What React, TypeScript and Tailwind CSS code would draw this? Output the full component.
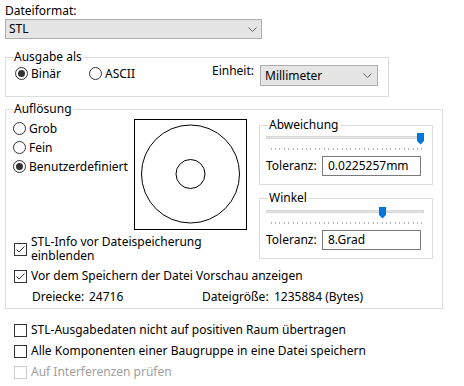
import React from 'react';

const Chevron = () => (
  <svg width="9" height="5" viewBox="0 0 9 5" className="block">
    <path d="M0.5 0.5 L4.5 4.5 L8.5 0.5" fill="none" stroke="#606060" strokeWidth="1" />
  </svg>
);

const Radio = ({ checked, label, className = '' }: { checked?: boolean; label: string; className?: string }) => (
  <div className={`flex items-center h-[19px] ${className}`}>
    <span className="w-[13px] h-[13px] rounded-full border border-[#333333] bg-white flex items-center justify-center shrink-0">
      {checked && <span className="w-[7px] h-[7px] rounded-full bg-[#333333]" />}
    </span>
    <span className="ml-[3px]">{label}</span>
  </div>
);

const Check = ({
  checked,
  disabled,
  className = '',
  children,
}: {
  checked?: boolean;
  disabled?: boolean;
  className?: string;
  children: React.ReactNode;
}) => (
  <div className={`flex items-center ${className}`}>
    <span
      className={`w-[13px] h-[13px] border bg-white flex items-center justify-center shrink-0 ${
        disabled ? 'border-[#cccccc]' : 'border-[#333333]'
      }`}
    >
      {checked && (
        <svg width="11" height="11" viewBox="0 0 11 11" className="block">
          <path d="M1.5 5.5 L4 8 L9.5 2.5" fill="none" stroke="#333333" strokeWidth="1" />
        </svg>
      )}
    </span>
    <span className={`ml-[4px] ${disabled ? 'text-[#a0a0a0]' : ''}`}>{children}</span>
  </div>
);

const GroupBox = ({
  title,
  className = '',
  titleLeft = 'left-[7px]',
  children,
}: {
  title: string;
  className?: string;
  titleLeft?: string;
  children?: React.ReactNode;
}) => (
  <div className={`relative border border-[#dcdcdc] ${className}`}>
    <span className={`absolute -top-[9px] ${titleLeft} bg-white px-[1px] leading-[16px]`}>{title}</span>
    {children}
  </div>
);

// track with ticks and a blue thumb, pos = thumb left in px
const Slider = ({ pos }: { pos: number }) => {
  const ticks = Array.from({ length: 35 }, (_, i) => 4.5 + i * 4.44);
  return (
    <svg width="160" height="21" className="block">
      <rect x="0.5" y="6.5" width="157" height="2" fill="#e7e7e7" stroke="#d6d6d6" />
      {ticks.map((x, i) => (
        <line key={i} x1={Math.round(x) + 0.5} y1="18" x2={Math.round(x) + 0.5} y2="20" stroke="#b4b4b4" />
      ))}
      <path d={`M${pos} 3 h7 v8 l-3.5 3.5 l-3.5 -3.5 z`} fill="#0078d7" />
    </svg>
  );
};

const Tolerance = ({ value }: { value: string }) => (
  <div className="flex items-center mt-[5px] pl-[6px]">
    <span className="w-[56px]">Toleranz:</span>
    <div className="w-[99px] h-[20px] border border-[#7a7a7a] bg-white flex items-center pl-[5px]">{value}</div>
  </div>
);

export default function App() {
  return (
    <div className="w-[464px] h-[386px] overflow-hidden bg-white text-black text-[12px] leading-[16px] font-['Noto_Sans',sans-serif] pl-[5px] pt-[3px]">
      <div>Dateiformat:</div>
      <div className="w-[257px] h-[20px] border border-[#adadad] bg-[#e5e5e5] flex items-center justify-between pl-[3px] pr-[4px]">
        <span>STL</span>
        <Chevron />
      </div>

      {/* Ausgabe als */}
      <GroupBox title="Ausgabe als" className="mt-[18px] w-[384px] h-[40px]">
        <div className="flex items-start pl-[9px]">
          <Radio checked label="Binär" className="w-[74px] mt-[6px]" />
          <Radio label="ASCII" className="w-[123px] mt-[6px]" />
          <div className="w-[48px] h-[19px] mt-[3px] flex items-center">Einheit:</div>
          <div className="w-[118px] h-[21px] mt-[7px] border border-[#adadad] bg-[#e5e5e5] flex items-center justify-between pl-[4px] pr-[5px]">
            <span>Millimeter</span>
            <Chevron />
          </div>
        </div>
      </GroupBox>

      {/* Auflösung */}
      <GroupBox title="Auflösung" className="mt-[12px] w-[438px] h-[200px]">
        <div className="flex">
          <div className="w-[253px] pl-[7px]">
            <div className="flex mt-[9px]">
              <div className="w-[121px] flex flex-col">
                <Radio label="Grob" />
                <Radio label="Fein" />
                <Radio checked label="Benutzerdefiniert" />
              </div>
              <div className="w-[113px] h-[111px] border border-black bg-white">
                <svg width="111" height="109" className="block">
                  <circle cx="55.5" cy="54" r="49" fill="none" stroke="black" strokeWidth="1" />
                  <circle cx="55.5" cy="54" r="14.5" fill="none" stroke="black" strokeWidth="1" />
                </svg>
              </div>
            </div>
            <Check checked className="mt-[5px] pl-[1px]">
              <span className="block leading-[14px]">
                STL-Info vor Dateispeicherung
                <br />
                einblenden
              </span>
            </Check>
          </div>

          <div className="w-[174px]">
            <GroupBox title="Abweichung" titleLeft="left-[8px]" className="mt-[15px] h-[60px]">
              <div className="pl-[6px] pt-[4px]">
                <Slider pos={151} />
              </div>
              <Tolerance value="0.0225257mm" />
            </GroupBox>
            <GroupBox title="Winkel" titleLeft="left-[8px]" className="mt-[13px] h-[61px]">
              <div className="pl-[6px] pt-[5px]">
                <Slider pos={113} />
              </div>
              <Tolerance value="8.Grad" />
            </GroupBox>
          </div>
        </div>

        <Check checked className="mt-[5px] pl-[8px] h-[16px]">
          Vor dem Speichern der Datei Vorschau anzeigen
        </Check>
        <div className="flex mt-[5px] pl-[26px] h-[16px]">
          <span className="w-[57px]">Dreiecke:</span>
          <span className="w-[113px]">24716</span>
          <span className="w-[72px]">Dateigröße:</span>
          <span>1235884 (Bytes)</span>
        </div>
      </GroupBox>

      <div className="pl-[9px]">
        <Check className="mt-[13px] h-[16px]">STL-Ausgabedaten nicht auf positiven Raum übertragen</Check>
        <Check className="mt-[5px] h-[16px]">Alle Komponenten einer Baugruppe in eine Datei speichern</Check>
        <Check disabled className="mt-[5px] h-[16px]">
          Auf Interferenzen prüfen
        </Check>
      </div>
    </div>
  );
}
